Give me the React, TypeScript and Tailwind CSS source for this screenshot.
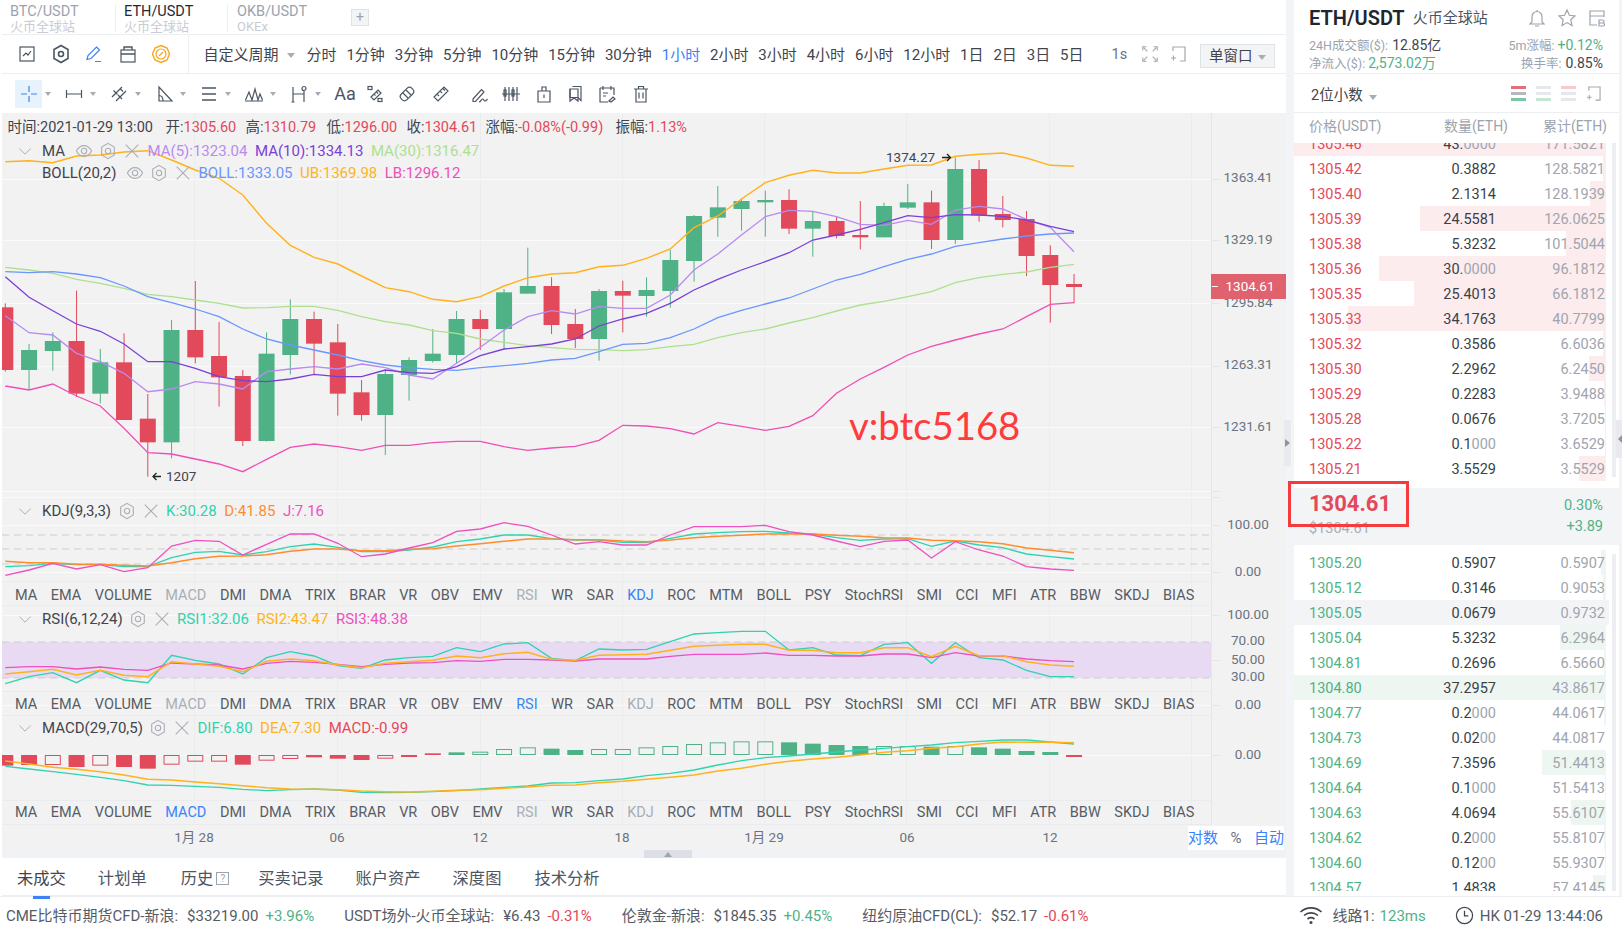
import React from "react";

// candle: [green?, wickTop, bodyTop, bodyBottom, wickBottom], y values in crop units (y = 140 + v / 3)
const candles: [number, number, number, number, number][] = [
  [0, 490, 502, 690, 695], [1, 612, 630, 690, 750], [1, 577, 603, 633, 692], [0, 452, 603, 761, 770],
  [1, 627, 667, 761, 790], [0, 580, 667, 840, 840], [0, 762, 836, 907, 1010], [1, 540, 570, 907, 955],
  [0, 423, 570, 652, 670], [0, 546, 648, 712, 800], [0, 690, 708, 903, 918], [1, 577, 641, 903, 905],
  [1, 478, 537, 645, 703], [0, 515, 537, 611, 703], [0, 552, 607, 761, 827], [0, 720, 757, 825, 842],
  [1, 690, 702, 825, 945], [1, 652, 660, 705, 782], [1, 567, 641, 663, 668], [1, 513, 537, 645, 670],
  [0, 510, 537, 567, 630], [1, 447, 457, 567, 628], [1, 323, 438, 461, 461], [0, 412, 438, 555, 582],
  [0, 507, 552, 597, 624], [1, 447, 453, 597, 662], [0, 422, 453, 467, 577], [1, 412, 450, 468, 530],
  [1, 330, 360, 453, 503], [1, 225, 228, 363, 425], [1, 138, 202, 233, 290], [1, 175, 183, 207, 272],
  [1, 152, 180, 187, 290], [0, 148, 180, 266, 282], [1, 215, 243, 266, 350], [0, 230, 243, 288, 295],
  [0, 183, 285, 292, 328], [1, 188, 198, 292, 292], [1, 132, 187, 203, 207], [0, 152, 187, 300, 327],
  [1, 52, 87, 300, 312], [0, 60, 87, 226, 245], [0, 168, 222, 240, 262], [0, 213, 237, 348, 408],
  [0, 316, 345, 435, 548], [0, 402, 432, 441, 490],
];

const ub = [65, 62, 68, 48, 45, 36, 32, 60, 90, 115, 165, 250, 316, 352, 372, 408, 443, 455, 478, 485, 470, 438, 413, 402, 398, 380, 376, 355, 327, 263, 228, 177, 128, 106, 91, 99, 99, 87, 76, 75, 49, 43, 39, 54, 76, 79];
const ma5 = [527, 578, 585, 640, 665, 700, 755, 747, 725, 732, 747, 695, 687, 680, 687, 672, 683, 705, 717, 670, 622, 570, 530, 512, 522, 500, 505, 505, 465, 390, 342, 285, 230, 211, 214, 230, 253, 256, 241, 253, 210, 199, 207, 238, 262, 335];
const ma10 = [410, 472, 512, 552, 574, 612, 665, 665, 685, 710, 722, 725, 717, 703, 710, 710, 690, 698, 700, 680, 647, 627, 620, 612, 597, 558, 537, 520, 490, 450, 418, 390, 365, 338, 300, 285, 268, 248, 227, 233, 224, 225, 229, 240, 259, 275];
const boll = [395, 398, 395, 402, 413, 438, 470, 488, 507, 530, 567, 597, 615, 630, 645, 662, 675, 683, 688, 691, 683, 677, 670, 660, 655, 635, 613, 610, 593, 567, 533, 511, 492, 474, 447, 420, 403, 380, 358, 342, 319, 308, 297, 288, 282, 279];
const ma30 = [382, 390, 400, 418, 430, 445, 463, 470, 480, 490, 504, 503, 499, 499, 511, 530, 545, 555, 572, 580, 597, 607, 617, 623, 628, 629, 632, 629, 620, 613, 593, 578, 567, 549, 533, 513, 495, 484, 470, 455, 428, 413, 403, 396, 382, 373];
const lb = [738, 750, 732, 768, 798, 865, 938, 942, 957, 972, 995, 958, 922, 912, 920, 931, 916, 916, 908, 904, 904, 920, 931, 924, 919, 901, 856, 858, 866, 882, 848, 859, 871, 859, 827, 760, 717, 682, 645, 619, 600, 582, 567, 530, 493, 488];

const kK = [230, 227, 220, 224, 224, 230, 230, 203, 187, 184, 195, 185, 170, 162, 172, 185, 185, 180, 171, 155, 147, 135, 135, 146, 150, 150, 157, 158, 145, 132, 128, 125, 124, 129, 132, 143, 151, 147, 146, 169, 153, 165, 173, 192, 200, 207];
const kD = [214, 218, 218, 223, 223, 226, 228, 218, 206, 199, 198, 194, 184, 177, 177, 182, 182, 178, 176, 168, 161, 154, 147, 147, 149, 149, 153, 155, 150, 143, 139, 136, 132, 131, 132, 136, 139, 143, 144, 151, 152, 155, 161, 174, 181, 188];
const kJ = [256, 240, 220, 237, 224, 245, 233, 168, 151, 154, 195, 163, 132, 132, 160, 200, 192, 174, 158, 124, 117, 98, 109, 135, 162, 155, 165, 165, 135, 110, 110, 110, 106, 125, 135, 153, 170, 154, 150, 204, 155, 180, 198, 230, 237, 241];
const r1 = [581, 560, 548, 578, 541, 570, 578, 496, 511, 522, 552, 503, 485, 498, 527, 535, 510, 503, 499, 473, 485, 462, 458, 505, 512, 477, 480, 478, 455, 432, 428, 424, 424, 480, 473, 495, 497, 463, 458, 520, 458, 503, 510, 541, 560, 560];
const r2 = [552, 545, 538, 555, 541, 556, 560, 515, 522, 529, 545, 514, 507, 512, 524, 533, 520, 515, 511, 498, 503, 491, 487, 508, 511, 496, 494, 493, 481, 469, 466, 463, 463, 481, 481, 488, 488, 473, 473, 500, 469, 497, 497, 515, 525, 529];
const r3 = [533, 530, 530, 537, 531, 538, 541, 519, 522, 525, 537, 520, 514, 517, 523, 530, 523, 519, 518, 512, 514, 508, 508, 510, 513, 507, 507, 507, 499, 493, 493, 493, 489, 496, 496, 498, 498, 492, 492, 503, 488, 498, 498, 507, 512, 515];
const dif = [139, 147, 155, 163, 172, 182, 195, 196, 199, 202, 208, 212, 209, 207, 210, 217, 218, 217, 215, 212, 207, 202, 198, 189, 188, 182, 177, 167, 160, 150, 135, 122, 113, 108, 102, 96, 90, 85, 80, 75, 68, 64, 60, 60, 66, 72];
const dea = [123, 132, 142, 148, 155, 165, 178, 180, 186, 191, 197, 203, 207, 208, 209, 213, 215, 216, 214, 211, 209, 205, 201, 196, 195, 188, 184, 178, 172, 165, 153, 145, 133, 124, 117, 112, 105, 97, 92, 85, 80, 72, 66, 67, 67, 68];

// macd: [top-or-bottom value, filled?], zero at 105
const macd: [number, number][] = [
  [137, 1], [135, 1], [135, 0], [141, 1], [137, 0], [141, 1], [146, 1], [134, 0], [125, 0], [125, 0], [134, 1], [122, 0], [117, 0], [112, 1], [116, 1], [120, 1], [116, 0], [111, 1],
  [100, 1], [97, 1], [95, 0], [87, 0], [82, 0], [86, 1], [90, 1], [87, 0], [87, 0], [82, 0], [78, 0], [72, 0], [67, 0], [64, 0], [64, 0], [67, 1], [71, 1], [75, 1], [78, 1], [78, 0], [78, 0], [80, 1], [78, 0], [82, 1], [86, 1], [93, 1], [96, 1], [111, 1],
];

const RED = "#e2495a";
const GREEN = "#4fb286";
const X = (i: number) => 5.3 + 23.75 * i;
const line = (vals: number[], base: number) =>
  vals.map((v, i) => `${X(i).toFixed(1)},${(base + v / 3).toFixed(1)}`).join(" ");

const vGrid = [194, 337, 480, 622, 764, 906, 1049, 1191];

const Series = ({ vals, base, color, w = 1.3 }: { vals: number[]; base: number; color: string; w?: number }) => (
  <polyline points={line(vals, base)} fill="none" stroke={color} strokeWidth={w} />
);

const Grid = ({ top, bottom, hs }: { top: number; bottom: number; hs: number[] }) => (
  <>
    {vGrid.map((x) => (
      <line key={x} x1={x + 0.5} x2={x + 0.5} y1={top} y2={bottom} stroke="#ebecee" />
    ))}
    {hs.map((y) => (
      <g key={y}>
        <line x1={2} x2={1212} y1={y + 0.5} y2={y + 0.5} stroke="#f9fafa" />
        <line x1={1212} x2={1220} y1={y + 0.5} y2={y + 0.5} stroke="#e5e6e8" />
      </g>
    ))}
    <line x1={1211.5} x2={1211.5} y1={top} y2={bottom} stroke="#e5e7ea" />
  </>
);

const AxisText = ({ y, children }: { y: number; children: React.ReactNode }) => (
  <text x={1248} y={y + 4} textAnchor="middle" className="fill-[#6b7280] text-[13.5px]">
    {children}
  </text>
);

const Ico = ({ children, size = 20, className = "" }: { children: React.ReactNode; size?: number; className?: string }) => (
  <svg viewBox="0 0 20 20" width={size} height={size} fill="none" stroke="currentColor" strokeWidth={1.2} className={className}>
    {children}
  </svg>
);

const Caret = ({ className = "" }: { className?: string }) => (
  <span className={`inline-block w-0 h-0 border-x-[4px] border-x-transparent border-t-[5px] border-t-[#a8adb5] ${className}`} />
);

const Eye = () => (
  <Ico size={18}>
    <path d="M1.5 10C4 5.5 7 4 10 4s6 1.500 8.5 6c-2.500 4.500-5.500 6-8.500 6s-6-1.500-8.500-6z" />
    <circle cx="10" cy="10" r="3" />
  </Ico>
);
const Hex = () => (
  <Ico size={18}>
    <path d="M10 1.5l7 4v9l-7 4-7-4v-9z" />
    <circle cx="10" cy="10" r="3" />
  </Ico>
);
const Cross = () => (
  <Ico size={18}>
    <path d="M3 3l14 14M17 3L3 17" />
  </Ico>
);
const Chevron = () => (
  <Ico size={16}>
    <path d="M3 7l7 7 7-7" />
  </Ico>
);

type Val = { t: string; c: string };

const Legend = ({ title, tw, eye, chevron = true, vals, h }: { title: string; tw: string; eye?: boolean; chevron?: boolean; vals: Val[]; h: string }) => (
  <div className={`relative top-[1px] flex items-center pl-[15px] text-[15px] ${h}`}>
    <span className="w-[16px] text-[#a8adb5] flex">{chevron && <Chevron />}</span>
    <span className={`ml-[9px] text-[#3f444d] ${tw}`}>{title}</span>
    <span className="flex gap-[6px] text-[#a9adb5] -ml-[1px]">
      {eye && <Eye />}
      <Hex />
      <Cross />
    </span>
    <span className="flex ml-[6.5px] gap-[7.5px]">
      {vals.map((v) => (
        <span key={v.t} style={{ color: v.c }}>
          {v.t}
        </span>
      ))}
    </span>
  </div>
);

const indicators = ["MA", "EMA", "VOLUME", "MACD", "DMI", "DMA", "TRIX", "BRAR", "VR", "OBV", "EMV", "RSI", "WR", "SAR", "KDJ", "ROC", "MTM", "BOLL", "PSY", "StochRSI", "SMI", "CCI", "MFI", "ATR", "BBW", "SKDJ", "BIAS"];

const IndicatorRow = ({ active, pt }: { active: string; pt: string }) => (
  <div className={`relative w-[1209.5px] h-[25px] flex items-center gap-[13.56px] pl-[13px] border-y border-[#e9ebee] mt-auto ${pt}`}>
    {indicators.map((n) => (
      <span
        key={n}
        className={
          n === active
            ? "text-[#3b82f6]"
            : ["MACD", "RSI", "KDJ"].includes(n)
            ? "text-[#a9aeb6]"
            : "text-[#565c66]"
        }
      >
        {n}
      </span>
    ))}
  </div>
);

const periods = ["分时", "1分钟", "3分钟", "5分钟", "10分钟", "15分钟", "30分钟", "1小时", "2小时", "3小时", "4小时", "6小时", "12小时", "1日", "2日", "3日", "5日"];

const toolLeft = [
  <Ico key="a" className="text-[#4b5563]"><rect x="3" y="3" width="14" height="14" /><path d="M6 12l3-3 2 2 3-4" /></Ico>,
  <Ico key="b" className="text-[#4b5563]"><path d="M10 1.5l7 4v9l-7 4-7-4v-9z" strokeWidth="1.6" /><circle cx="10" cy="10" r="2.5" strokeWidth="1.6" /></Ico>,
  <Ico key="c" className="text-[#3b82f6]"><path d="M12.5 3l3 3-8.5 8.500-4 1 1-4zM11 17.500h6" /></Ico>,
  <Ico key="d" className="text-[#4b5563]"><rect x="3" y="6" width="14" height="12" /><path d="M3 10h14M6 6V3h8v3" strokeWidth="1.4" /></Ico>,
  <Ico key="e" className="text-[#f5a623]"><path d="M10 1.5l6 2.500 2.500 6-2.500 6-6 2.500-6-2.500-2.500-6 2.500-6z" strokeWidth="1.4" /><circle cx="10" cy="10" r="5" /><path d="M8 12l4-4" /></Ico>,
];

// widths are just the spacing of the tool buttons in the drawing bar
const drawTools: { w: string; caret?: boolean; active?: boolean; icon: React.ReactNode }[] = [
  { w: "w-[45px]", caret: true, active: true, icon: <Ico className="text-[#3b82f6]"><path d="M10 2v6M10 12v6M2 10h6M12 10h6" /></Ico> },
  { w: "w-[45px]", caret: true, icon: <Ico><path d="M2 10h16M2.5 6v8M17.5 6v8" /></Ico> },
  { w: "w-[45px]", caret: true, icon: <Ico><path d="M3 13L13 3M7 17L17 7M4.5 6.500l4 4M9 11l4 4M11 4.500l3 3" /></Ico> },
  { w: "w-[45px]", caret: true, icon: <Ico><path d="M5 3v14h13zM5 11.500c2.500 0 4 2 4 5.500" /></Ico> },
  { w: "w-[45px]", caret: true, icon: <Ico><path d="M3 4h14M3 10h14M3 16h14" strokeWidth="1.5" /></Ico> },
  { w: "w-[45px]", caret: true, icon: <Ico><path d="M1.5 16L5 8l3 8 3-11 3 11 2-6 2.500 6M1 17h18" /></Ico> },
  { w: "w-[45px]", caret: true, icon: <Ico><path d="M4 3v15M15 7v11M4 10h11M2.5 18h3" /><circle cx="15" cy="4.5" r="2" /></Ico> },
  { w: "w-[30px]", icon: <span className="text-[18px] text-[#4b5563]">Aa</span> },
  { w: "w-[30px]", icon: <Ico><path d="M6 13l7-7 3 3-7 7zM9 10l1.500 1.500M11.500 8l1.500 1.500" /><rect x="3" y="2.5" width="4" height="3" /><rect x="13" y="14.5" width="4" height="3" /></Ico> },
  { w: "w-[33px]", icon: <Ico><rect x="2.5" y="6" width="15" height="8" rx="3.5" transform="rotate(-45 10 10)" /><path d="M6 9l5 5M9 6l5 5" /></Ico> },
  { w: "w-[36px]", icon: <Ico><path d="M3 13L13 3l4 4L7 17zM6 10l2 2M9 7l2 2M12 4.500l2 2" /></Ico> },
  { w: "w-[40px]", icon: <Ico><path d="M4 15l8.500-9.500 2.500 2.500L6.500 17.500H4zM10 18c2 0 2-3 3.500-3s1 2 2.500 2 1.500-1 2.500-2" /></Ico> },
  { w: "w-[23px]", icon: <Ico><path d="M1 10h18M4 3v14M8 3v14M12 3v14M16 3v14" /><rect x="3" y="6" width="2" height="6" /><rect x="11" y="6" width="2" height="6" /></Ico> },
  { w: "w-[44px]", icon: <Ico><path d="M4 7h12v11H4zM8 7V3h4v4M10 10.500v3.500" /></Ico> },
  { w: "w-[20px]", icon: <Ico><path d="M6.5 2.500H15v14l-3-3H4V5" /><path d="M4 5h8v12l-4-3-4 3z" /></Ico> },
  { w: "w-[42px]", icon: <Ico><path d="M3 4h14v7M3 4v14h8M6 2v4M14 2v4M6 9h5M6 12h3M12 17l4-4 2 2-4 3z" /></Ico> },
  { w: "w-[26px]", icon: <Ico><path d="M3 5h14M5 5v13h10V5M7.5 5V2.500h5V5M8 8.500v6M12 8.500v6" /></Ico> },
];

const Bars = ({ color }: { color: string[] }) => (
  <svg width="15" height="15" viewBox="0 0 15 15">
    <rect y="0" width="15" height="3" fill={color[0]} />
    <rect y="6" width="15" height="3" fill={color[1]} />
    <rect y="12" width="15" height="3" fill={color[2]} />
  </svg>
);

const AddWin = ({ size = 16 }: { size?: number }) => (
  <svg viewBox="0 0 16 16" width={size} height={size} fill="none" stroke="#a3a8b0" strokeWidth="1.2">
    <path d="M3 5V1h12v14h-5" />
    <path d="M1 12h5M3.5 9.500v5" />
  </svg>
);

type Row = [string, string, string, number, boolean?];

const asks: Row[] = [
  ["1305.46", "43.0000", "171.5821", 312],
  ["1305.42", "0.3882", "128.5821", 3],
  ["1305.40", "2.1314", "128.1939", 16],
  ["1305.39", "24.5581", "126.0625", 186],
  ["1305.38", "5.3232", "101.5044", 40],
  ["1305.36", "30.0000", "96.1812", 227],
  ["1305.35", "25.4013", "66.1812", 192],
  ["1305.33", "34.1763", "40.7799", 258],
  ["1305.32", "0.3586", "6.6036", 3],
  ["1305.30", "2.2962", "6.2450", 17],
  ["1305.29", "0.2283", "3.9488", 2],
  ["1305.28", "0.0676", "3.7205", 1],
  ["1305.22", "0.1000", "3.6529", 1],
  ["1305.21", "3.5529", "3.5529", 27],
];
const bids: Row[] = [
  ["1305.20", "0.5907", "0.5907", 5],
  ["1305.12", "0.3146", "0.9053", 3],
  ["1305.05", "0.0679", "0.9732", 1, true],
  ["1305.04", "5.3232", "6.2964", 46],
  ["1304.81", "0.2696", "6.5660", 2],
  ["1304.80", "37.2957", "43.8617", 312],
  ["1304.77", "0.2000", "44.0617", 2],
  ["1304.73", "0.0200", "44.0817", 0],
  ["1304.69", "7.3596", "51.4413", 64],
  ["1304.64", "0.1000", "51.5413", 1],
  ["1304.63", "4.0694", "55.6107", 35],
  ["1304.62", "0.2000", "55.8107", 2],
  ["1304.60", "0.1200", "55.9307", 1],
  ["1304.57", "1.4838", "57.4145", 13],
];

const BookRow = ({ row, buy }: { row: Row; buy?: boolean }) => {
  const [price, amount, total, depth, hover] = row;
  const zeros = amount.match(/0+$/)?.[0] ?? "";
  return (
    <div className={`relative shrink-0 w-[315px] h-[25px] flex items-center pl-[15px] pt-[4px] ${hover ? "bg-[#f3f4f6]" : ""}`}>
      <span
        className={`absolute right-[3px] top-0 bottom-0 ${buy ? "bg-[#eef6f2]" : "bg-[#fcecee]"}`}
        style={{ width: depth }}
      />
      <span className={`relative w-[100px] ${buy ? "text-[#4fb286]" : "text-[#e2495a]"}`}>{price}</span>
      <span className="relative w-[87px] text-right text-[#3b3f46]">
        {amount.slice(0, amount.length - zeros.length)}
        <span className="text-[#a0a5ae]">{zeros}</span>
      </span>
      <span className="relative w-[109px] text-right text-[#a0a5ae]">{total}</span>
    </div>
  );
};

const FooterItem = ({ name, price, pct, up }: { name: string; price: string; pct: string; up?: boolean }) => (
  <span className="flex text-[#565c66]">
    <span className="mr-[9px]">{name}</span>
    <span className="mr-[7px]">{price}</span>
    <span className={up ? "text-[#4fb286]" : "text-[#e2495a]"}>{pct}</span>
  </span>
);

export default function App() {
  return (
    <div className="w-[1622px] h-[933px] flex flex-col overflow-hidden bg-[#f3f4f7] text-[14.5px] leading-none [font-family:Roboto,'Noto_Sans_CJK_SC',sans-serif]">
      <div className="flex h-[896px]">
        {/* left: chart column */}
        <div className="w-[1286px] pl-[2px] bg-white flex flex-col">
          <div className="h-[35px] flex items-center border-b border-[#eceef1]">
            {[
              { a: "BTC/USDT", b: "火币全球站", w: "w-[113px]", pl: "pl-[8px]" },
              { a: "ETH/USDT", b: "火币全球站", w: "w-[112px]", pl: "pl-[8px] border-l border-[#eceef1]" , on: true },
              { a: "OKB/USDT", b: "OKEx", w: "w-[122px]", pl: "pl-[9px] border-l border-[#eceef1]" },
            ].map((t) => (
              <div key={t.a} className={`h-[27px] mt-[3px] flex flex-col justify-between ${t.w} ${t.pl}`}>
                <span className={t.on ? "text-[#1f2937]" : "text-[#9ca3af]"}>{t.a}</span>
                <span className="text-[13px] text-[#c9ccd2]">{t.b}</span>
              </div>
            ))}
            <span className="ml-[2px] w-[18px] h-[17px] bg-[#f3f4f6] border border-[#dfe2e8] text-[#9ca3af] flex items-center justify-center text-[14px]">+</span>
          </div>

          <div className="h-[39px] flex items-center border-b border-[#eceef1]">
            <div className="w-[186.5px] h-full flex items-center gap-[13.5px] pl-[15px] border-r border-[#eceef1]">{toolLeft}</div>
            <span className="ml-[15px] mt-[3px] text-[#3f444d] text-[15px]">自定义周期</span>
            <Caret className="ml-[8px] mr-[12px] mt-[2px]" />
            <div className="flex gap-[9.9px] text-[#3f444d] text-[15px] mt-[3px]">
              {periods.map((p) => (
                <span key={p} className={p === "1小时" ? "text-[#3b82f6]" : ""}>
                  {p}
                </span>
              ))}
            </div>
            <span className="ml-[28px] mt-[3px] text-[#6b7280]">1s</span>
            <Ico size={18} className="ml-[14px] text-[#a3a8b0]">
              <path d="M2 6V2h4M14 2h4v4M18 14v4h-4M6 18H2v-4M3 3l4 4M17 3l-4 4M17 17l-4-4M3 17l4-4" />
            </Ico>
            <span className="ml-[11px]"><AddWin /></span>
            <div className="ml-[14px] mt-[3px] w-[75px] h-[24px] pt-[3px] flex items-center justify-center gap-[6px] bg-[#f3f4f6] border border-[#dfe2e8] text-[#3f444d]">
              单窗口
              <Caret />
            </div>
          </div>

          <div className="h-[39px] flex items-center pl-[13px] text-[#4b5563]">
            {drawTools.map((t, i) => (
              <div key={i} className={`flex items-center ${t.w} shrink-0`}>
                <span className={`flex items-center justify-center h-[28px] ${t.caret ? "w-[27px]" : "w-full"} ${t.active ? "bg-[#e6f3fc]" : ""}`}>{t.icon}</span>
                {t.caret && <Caret className="ml-[3px] !border-x-[3.5px] !border-t-[4px]" />}
              </div>
            ))}
          </div>

          {/* main price pane */}
          <div className="relative h-[384px] bg-[#f2f2f2] overflow-hidden">
            <svg className="absolute inset-0" width={1284} height={384} viewBox="2 113 1284 384">
              <Grid top={113} bottom={497} hs={[179, 240, 303, 366, 427, 491]} />
              {candles.map((c, i) => {
                const [g, wt, bt, bb, wb] = c;
                const col = g ? GREEN : RED;
                return (
                  <g key={i}>
                    <line x1={X(i)} x2={X(i)} y1={140 + wt / 3} y2={140 + wb / 3} stroke={col} strokeWidth={1} />
                    <rect x={X(i) - 8} y={140 + bt / 3} width={16} height={(bb - bt) / 3} fill={col} />
                  </g>
                );
              })}
              <Series vals={ma30} base={140} color="#aee08e" />
              <Series vals={boll} base={140} color="#6b95ff" />
              <Series vals={ma5} base={140} color="#b98af0" />
              <Series vals={ma10} base={140} color="#7a3fd9" />
              <Series vals={ub} base={140} color="#ffb21a" w={1.4} />
              <Series vals={lb} base={140} color="#ef4fb5" />
              <AxisText y={178}>1363.41</AxisText>
              <AxisText y={240}>1329.19</AxisText>
              <AxisText y={303}>1295.84</AxisText>
              <AxisText y={365}>1263.31</AxisText>
              <AxisText y={427}>1231.61</AxisText>
              <text x={886} y={162} className="fill-[#3f444d] text-[13.5px]">1374.27</text>
              <path d="M942 157.5h8M947 154l3.500 3.500-3.500 3.500" stroke="#222" strokeWidth="1.3" fill="none" />
              <path d="M161 476.5h-8M156.500 473l-3.500 3.500 3.500 3.500" stroke="#222" strokeWidth="1.3" fill="none" />
              <text x={166} y={481} className="fill-[#3f444d] text-[13.5px]">1207</text>
            </svg>

            <div className="relative h-[28px] flex items-center pt-[3px] pl-[5.5px] gap-[8px] text-[#3f444d]">
              <span className="w-[150px]">时间:2021-01-29 13:00</span>
              {[
                ["开:", "1305.60", "w-[72px]"],
                ["高:", "1310.79", "w-[73px]"],
                ["低:", "1296.00", "w-[72px]"],
                ["收:", "1304.61", "w-[71px]"],
                ["涨幅:", "-0.08%(-0.99)", "w-[120px]"],
                ["振幅:", "1.13%", "ml-[2px]"],
              ].map(([k, v, w]) => (
                <span key={k} className={w}>
                  {k}
                  <span className="text-[#e2495a]">{v}</span>
                </span>
              ))}
            </div>
            <Legend
              title="MA"
              tw="w-[34px]"
              eye
              h="h-[18px]"
              vals={[
                { t: "MA(5):1323.04", c: "#b98af0" },
                { t: "MA(10):1334.13", c: "#7a3fd9" },
                { t: "MA(30):1316.47", c: "#aee08e" },
              ]}
            />
            <div className="h-[4px]" />
            <Legend
              title="BOLL(20,2)"
              tw="w-[85px]"
              eye
              chevron={false}
              h="h-[18px]"
              vals={[
                { t: "BOLL:1333.05", c: "#6b95ff" },
                { t: "UB:1369.98", c: "#ffb21a" },
                { t: "LB:1296.12", c: "#ef4fb5" },
              ]}
            />

            <span className="absolute left-[847px] top-[293px] text-[38.3px] text-[#ff3b3b] [font-family:Lato,sans-serif]">v:btc5168</span>
            <div className="absolute left-[1209px] top-[161px] w-[75px] h-[25px] bg-[#e0626e] text-white text-[13.5px] flex items-center justify-center pl-[3px]">
              <span className="absolute left-[1px] w-[6px] h-px bg-white" />
              1304.61
            </div>
          </div>

          {/* KDJ */}
          <div className="relative h-[109px] flex flex-col bg-[#f2f2f2]">
            <svg className="absolute inset-0" width={1284} height={109} viewBox="2 497 1284 109">
              <Grid top={497} bottom={606} hs={[497, 525, 572]} />
              {[535, 549, 564].map((y) => (
                <line key={y} x1={2} x2={1212} y1={y} y2={y} stroke="#cdcdcd" strokeDasharray="7 5" />
              ))}
              <Series vals={kK} base={490} color="#2ed3b0" />
              <Series vals={kD} base={490} color="#ff8c2e" w={1.5} />
              <Series vals={kJ} base={490} color="#ef4fc0" />
              <AxisText y={525}>100.00</AxisText>
              <AxisText y={572}>0.00</AxisText>
            </svg>
            <Legend
              title="KDJ(9,3,3)"
              tw="w-[76.5px]"
              h="h-[26px]"
              vals={[
                { t: "K:30.28", c: "#2ed3b0" },
                { t: "D:41.85", c: "#ff8c2e" },
                { t: "J:7.16", c: "#ef4fc0" },
              ]}
            />
            <IndicatorRow active="KDJ" pt="pt-[6px]" />
          </div>

          {/* RSI */}
          <div className="relative h-[110px] flex flex-col bg-[#f2f2f2]">
            <svg className="absolute inset-0" width={1284} height={110} viewBox="2 606 1284 110">
              <Grid top={606} bottom={716} hs={[615, 660, 705]} />
              <rect x={2} y={642} width={1209} height={36} fill="#e8daf3" />
              {[642, 678].map((y) => (
                <line key={y} x1={2} x2={1212} y1={y} y2={y} stroke="#cdcdcd" strokeDasharray="7 5" />
              ))}
              <Series vals={r1} base={490} color="#2ed3b0" />
              <Series vals={r3} base={490} color="#ef4fc0" />
              <Series vals={r2} base={490} color="#ffb21a" w={1.4} />
              <AxisText y={615}>100.00</AxisText>
              <AxisText y={641}>70.00</AxisText>
              <AxisText y={660}>50.00</AxisText>
              <AxisText y={677}>30.00</AxisText>
              <AxisText y={705}>0.00</AxisText>
            </svg>
            <Legend
              title="RSI(6,12,24)"
              tw="w-[87.5px]"
              h="h-[24px]"
              vals={[
                { t: "RSI1:32.06", c: "#2ed3b0" },
                { t: "RSI2:43.47", c: "#ffb21a" },
                { t: "RSI3:48.38", c: "#ef4fc0" },
              ]}
            />
            <IndicatorRow active="RSI" pt="pt-[4px]" />
          </div>

          {/* MACD */}
          <div className="relative h-[109px] flex flex-col bg-[#f2f2f2]">
            <svg className="absolute inset-0" width={1284} height={109} viewBox="2 716 1284 109">
              <Grid top={716} bottom={825} hs={[755]} />
              {macd.map(([v, filled], i) => {
                const col = i <= 18 || i === 45 ? RED : GREEN;
                const top = v < 105 ? 720 + v / 3 : 755;
                const h = Math.abs(v - 105) / 3;
                return filled ? (
                  <rect key={i} x={X(i) - 8} y={top} width={16} height={h} fill={col} />
                ) : (
                  <rect key={i} x={X(i) - 7.5} y={top + 0.5} width={15} height={h - 1} fill="none" stroke={col} />
                );
              })}
              <Series vals={dif} base={720} color="#2ed3b0" />
              <Series vals={dea} base={720} color="#ffb21a" w={1.4} />
              <AxisText y={755}>0.00</AxisText>
            </svg>
            <Legend
              title="MACD(29,70,5)"
              tw="w-[108px]"
              h="h-[22px]"
              vals={[
                { t: "DIF:6.80", c: "#2ed3b0" },
                { t: "DEA:7.30", c: "#ffb21a" },
                { t: "MACD:-0.99", c: "#e5485a" },
              ]}
            />
            <IndicatorRow active="MACD" pt="pt-[2px]" />
          </div>

          {/* time axis */}
          <div className="relative h-[25px] bg-[#f2f2f2]">
            <svg className="absolute inset-0" width={1284} height={25} viewBox="2 825 1284 25">
              {[
                [194, "1月 28"],
                [337, "06"],
                [480, "12"],
                [622, "18"],
                [764, "1月 29"],
                [907, "06"],
                [1050, "12"],
              ].map(([x, t]) => (
                <text key={x} x={x} y={842} textAnchor="middle" className="fill-[#6b7280] text-[13.5px]">
                  {t}
                </text>
              ))}
            </svg>
            <div className="absolute right-[2px] top-[1px] w-[96px] h-[25px] bg-white flex items-center justify-between text-[15px] text-[#3b82f6]">
              <span>对数</span>
              <span className="text-[#6b7280]">%</span>
              <span>自动</span>
            </div>
          </div>

          <div className="relative h-[8px] bg-[#f1f2f6]">
            <div className="absolute left-[642px] top-0 w-[48px] h-[8px] bg-[#dcdfe5] flex items-center justify-center">
              <span className="w-0 h-0 border-x-[4px] border-x-transparent border-b-[5px] border-b-[#a0a4ab]" />
            </div>
          </div>

          <div className="relative h-[38px] flex items-center gap-[32px] pl-[15px] pt-[5px] text-[16.3px] text-[#4b5563] border-b border-[#eceef1]">
            <span className="relative text-[#3f444d]">
              未成交
              <span className="absolute left-[16px] -bottom-[12px] w-[17px] h-[3px] bg-[#3b82f6]" />
            </span>
            <span>计划单</span>
            <span className="ml-[2px] flex items-center gap-[3px]">
              历史
              <span className="w-[13px] h-[13px] border border-[#9ca3af] text-[10px] text-[#9ca3af] flex items-center justify-center">?</span>
            </span>
            <span className="-ml-[3px]">买卖记录</span>
            <span>账户资产</span>
            <span>深度图</span>
            <span className="ml-[1px]">技术分析</span>
          </div>
        </div>

        {/* gap with collapse handle */}
        <div className="relative w-[8px]">
          <div className="absolute left-[-2px] top-[420px] w-[7px] h-[46px] bg-[#e8eaee] flex items-center justify-center">
            <span className="w-0 h-0 border-y-[4px] border-y-transparent border-l-[5px] border-l-[#8f949c]" />
          </div>
        </div>

        {/* right: order book */}
        <div className="relative w-[325px] bg-white flex flex-col">
          <div className="h-[74px] border-b border-[#eceef1] pl-[15px] pr-[16px] flex flex-col">
            <div className="h-[37px] flex items-center">
              <span className="text-[20px] font-semibold text-[#1f2630]">ETH/USDT</span>
              <span className="ml-[8px] text-[15px] text-[#4b5563]">火币全球站</span>
              <span className="ml-auto -mr-[4px] flex gap-[10px] text-[#9ca3af]">
                <Ico><path d="M5 14V8.500a5 5 0 0110 0V14l2 2H3zM8 18h4M10 2v1.500" /></Ico>
                <Ico><path d="M10 2l2.400 5.300 5.600.700-4.200 3.800 1.200 5.700-5-2.900-5 2.900 1.200-5.700L2 8l5.600-.700z" /></Ico>
                <Ico><path d="M10 17H3V3h14v6M3 8h14M12 12h3.500a1.500 1.500 0 010 3H12zM12 15h4a1.500 1.500 0 010 3h-4z" /></Ico>
              </span>
            </div>
            <div className="flex justify-between items-center h-[18px]">
              <span className="text-[12.5px] text-[#9ca3af]">
                24H成交额($):<span className="ml-[4px] text-[14px] text-[#3f444d]">12.85亿</span>
              </span>
              <span className="text-[12.5px] text-[#9ca3af]">
                5m涨幅:<span className="ml-[3px] text-[14px] text-[#4fb286]">+0.12%</span>
              </span>
            </div>
            <div className="flex justify-between items-center h-[19px]">
              <span className="text-[12.5px] text-[#9ca3af]">
                净流入($):<span className="ml-[3px] text-[14px] text-[#4fb286]">2,573.02万</span>
              </span>
              <span className="text-[12.5px] text-[#9ca3af]">
                换手率:<span className="ml-[4px] text-[14px] text-[#3f444d]">0.85%</span>
              </span>
            </div>
          </div>

          <div className="h-[39px] border-b border-[#eceef1] flex items-center pl-[17px] pr-[18px]">
            <span className="text-[#3f444d] mt-[6px]">2位小数</span>
            <Caret className="ml-[6px] mt-[8px]" />
            <span className="ml-auto flex items-center gap-[10px]">
              <Bars color={["#e2707c", "#b4b8bf", "#7cc5a3"]} />
              <Bars color={["#e6e8ec", "#e6e8ec", "#c4e6d4"]} />
              <Bars color={["#f8c9ce", "#e6e8ec", "#e6e8ec"]} />
              <AddWin size={15} />
            </span>
          </div>

          <div className="h-[30px] flex items-center pl-[15px] pr-[12px] pb-[4px] text-[14px] text-[#9ca3af]">
            <span className="w-[105px]">价格(USDT)</span>
            <span className="w-[94px] text-right">数量(ETH)</span>
            <span className="ml-auto">累计(ETH)</span>
          </div>

          <div className="relative h-[338px] overflow-hidden flex flex-col justify-end">
            <span className="absolute right-[3px] top-0 bottom-[4px] w-[4px] bg-[#eceef1]" />
            {asks.map((r) => (
              <BookRow key={r[0]} row={r} />
            ))}
          </div>
          <div className="h-[7px]" />

          <div className="relative h-[57px] bg-[#f3f4f6] pl-[15px] pr-[16px] flex justify-between">
            <div className="pt-[1px] flex flex-col">
              <span className="text-[22px] font-bold text-[#e2495a] leading-[30px]">1304.61</span>
              <span className="text-[#a9aeb5] mt-[3px]">$1304.61</span>
            </div>
            <div className="flex flex-col items-end gap-[6px] pt-[11px] text-[#4fb286]">
              <span>0.30%</span>
              <span>+3.89</span>
            </div>
            <div className="absolute left-[-6px] top-[-7px] w-[121px] h-[46px] border-[3px] border-[#f53b3b]" />
          </div>

          <div className="relative h-[346px] pt-[5px] overflow-hidden flex flex-col">
            <span className="absolute right-[3px] top-[9px] bottom-0 w-[4px] bg-[#eceef1]" />
            {bids.map((r) => (
              <BookRow key={r[0]} row={r} buy />
            ))}
          </div>
          <div className="h-[5px]" />

          <div className="absolute left-[322px] top-[420px] w-[6px] h-[38px] bg-[#e8eaee] flex items-center justify-end">
            <span className="w-0 h-0 border-y-[4px] border-y-transparent border-r-[4px] border-r-[#8f949c]" />
          </div>
        </div>
      </div>

      <div className="h-[37px] bg-white border-t border-[#eceef1] flex items-center pl-[6px] pr-[19px] pt-[3px] gap-[30px] text-[15px]">
        <FooterItem name="CME比特币期货CFD-新浪:" price="$33219.00" pct="+3.96%" up />
        <FooterItem name="USDT场外-火币全球站:" price="¥6.43" pct="-0.31%" />
        <FooterItem name="伦敦金-新浪:" price="$1845.35" pct="+0.45%" up />
        <FooterItem name="纽约原油CFD(CL):" price="$52.17" pct="-0.61%" />
        <span className="ml-auto flex items-center gap-[8px] text-[#565c66]">
          <svg viewBox="0 0 24 20" width="26" height="20" fill="none" stroke="#3f444d" strokeWidth="1.6" className="-mt-[3px]">
            <path d="M1.5 7c6-5.500 15-5.500 21 0M5 10.500c4-3.500 10-3.500 14 0M8.500 14c2-1.500 5-1.500 7 0" />
            <circle cx="12" cy="17.5" r="1.5" fill="#3f444d" stroke="none" />
          </svg>
          线路1:<span className="text-[#4fb286] -ml-[3px]">123ms</span>
        </span>
        <span className="flex items-center gap-[6px] text-[#565c66] -ml-[1px]">
          <svg viewBox="0 0 20 20" width="19" height="19" fill="none" stroke="#3f444d" strokeWidth="1.3" className="-mt-[3px]">
            <circle cx="10" cy="10" r="8.5" />
            <path d="M10 5v5.500h4" />
          </svg>
          HK 01-29 13:44:06
        </span>
      </div>
    </div>
  );
}
